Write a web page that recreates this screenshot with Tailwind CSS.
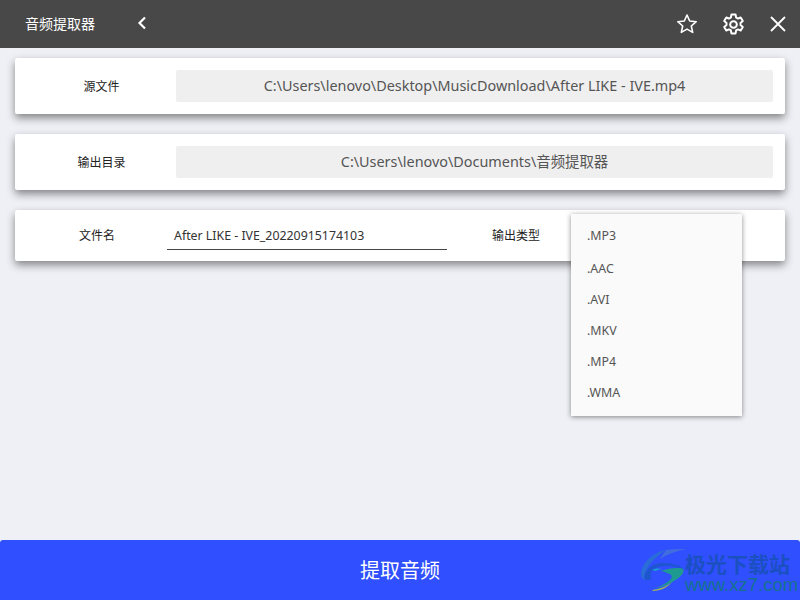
<!DOCTYPE html>
<html lang="zh">
<head>
<meta charset="utf-8">
<script src="https://cdn.jsdelivr.net/npm/@tailwindcss/browser@4"></script>
</head>
<body class="m-0">
<div class="relative w-[800px] h-[600px] overflow-hidden flex flex-col bg-[#eff0f5] font-['Noto_Sans','Noto_Sans_CJK_SC',sans-serif]">
  <header class="h-12 shrink-0 bg-[#484848] flex items-center text-white">
    <div class="w-[71px] ml-[25px] text-[14px] leading-none">音频提取器</div>
    <svg class="ml-[39px] -mt-[3px]" width="14" height="14" viewBox="0 0 14 14" fill="none" stroke="#fff" stroke-width="2.2"><path d="M10 1.5 4.5 7l5.5 5.5"/></svg>
    <div class="ml-auto flex items-center">
      <svg class="mr-[24px]" width="22" height="22" viewBox="0 0 22 22" fill="none" stroke="#fff" stroke-width="1.6" stroke-linejoin="round"><path d="M11 2l2.7 6 6.5.7-4.9 4.3 1.4 6.4L11 16.1l-5.7 3.3 1.4-6.4-4.9-4.3 6.5-.7z"/></svg>
      <svg class="mr-[25px]" width="23" height="23" viewBox="0 0 22 22" fill="none" stroke="#fff" stroke-width="1.9" stroke-linejoin="round"><path d="M9 1.5h4l.5 2.8 1.7 1 2.7-1 2 3.4-2.2 1.8v2l2.2 1.8-2 3.4-2.7-1-1.7 1-.5 2.8H9l-.5-2.8-1.7-1-2.7 1-2-3.4 2.2-1.8v-2L2.1 7.7l2-3.4 2.7 1 1.7-1z"/><circle cx="11" cy="11" r="3.2"/></svg>
      <svg class="mr-[14px]" width="16" height="16" viewBox="0 0 16 16" fill="none" stroke="#fff" stroke-width="1.8"><path d="M1 1l14 14M15 1 1 15"/></svg>
    </div>
  </header>

  <main class="flex-1 flex flex-col gap-5 px-[15px] pt-[10px]">
    <section class="h-14 bg-white rounded-[2px] shadow-[0_4px_8px_rgba(0,0,0,0.45)] flex items-center pl-[161px] pr-3 relative">
      <div class="absolute left-0 w-[173px] pt-[2px] text-center text-xs text-[#222]">源文件</div>
      <div class="flex-1 h-8 rounded-[2px] bg-[#efefef] flex items-center justify-center text-[14.4px] text-[#555]">C:\Users\lenovo\Desktop\MusicDownload\After LIKE - IVE.mp4</div>
    </section>
    <section class="h-14 bg-white rounded-[2px] shadow-[0_4px_8px_rgba(0,0,0,0.45)] flex items-center pl-[161px] pr-3 relative">
      <div class="absolute left-0 w-[173px] pt-[2px] text-center text-xs text-[#222]">输出目录</div>
      <div class="flex-1 h-8 rounded-[2px] bg-[#efefef] flex items-center justify-center text-[14.4px] text-[#555]">C:\Users\lenovo\Documents\音频提取器</div>
    </section>
    <section class="h-[51px] bg-white rounded-[2px] shadow-[0_4px_8px_rgba(0,0,0,0.45)] flex items-center relative">
      <div class="absolute left-0 w-[164px] text-center text-xs text-[#222]">文件名</div>
      <div class="ml-[152px] w-[280px] h-[26px] pl-[7px] flex items-center text-[12.35px] text-[#333] border-b border-[#444] mt-[2px]">After LIKE - IVE_20220915174103</div>
      <div class="ml-[45px] text-xs text-[#222]">输出类型</div>
    </section>
  </main>

  <div class="absolute left-[571px] top-[214px] w-[171px] h-[202px] bg-[#fafafa] shadow-[0_1px_5px_rgba(0,0,0,0.45)] flex flex-col pl-4 text-[12.4px] text-[#555]">
    <div class="h-[31px] mt-[7px] flex items-center">.MP3</div>
    <div class="h-[31px] mt-[2px] flex items-center">.AAC</div>
    <div class="h-[31px] flex items-center">.AVI</div>
    <div class="h-[31px] flex items-center">.MKV</div>
    <div class="h-[31px] flex items-center">.MP4</div>
    <div class="h-[31px] flex items-center">.WMA</div>
  </div>

  <button class="h-[60px] shrink-0 bg-[#304ffe] rounded-t-[3px] text-white text-xl flex items-center justify-center font-['Noto_Sans_CJK_SC',sans-serif]">提取音频</button>

  <div class="absolute left-[640px] top-[549px] flex items-start">
    <svg width="46" height="42" viewBox="0 0 46 42" fill="none">
      <path d="M26 1C14 3 3 12 1 23c-.5 4 1 7 4 8C3 22 12 10 26 1z" fill="#2a6cd8"/>
      <path d="M26 1c6-1 13-1 20-1-10 2-18 5-26 10z" fill="#4a7ad0" opacity="0.7"/>
      <path d="M5 31c-2-6 3-16 17-17 9 0 18 2 21 6-6-2-14-4-20-3-9 1-14 6-12 11 1 2 1 3-6 3z" fill="#1d56cf"/>
      <path d="M12 21c3-2 8-2 11 0-3-1-6 0-7 1z" fill="#1a9fd0"/>
      <path d="M21 22c8-3 18-4 22-2 4 6-14 17-29 20 14-6 20-11 17-14-2-2-6-3-10-4z" fill="#1f9a90"/>
      <path d="M12 41c8-1 15-4 20-8-4 5-11 9-19 9z" fill="#9db060"/>
    </svg>
    <div class="flex flex-col leading-none pt-[2px] -ml-[1px]">
      <div class="text-[21px] font-bold text-[#1a50c0] h-[24px] flex items-center whitespace-nowrap font-['Noto_Sans_CJK_SC',sans-serif]">极光下载站</div>
      <div class="text-[18.5px] mt-[1px] text-[#14708f] whitespace-nowrap font-['Liberation_Sans',sans-serif]">www.xz7.com</div>
    </div>
  </div>
</div>
</body>
</html>
